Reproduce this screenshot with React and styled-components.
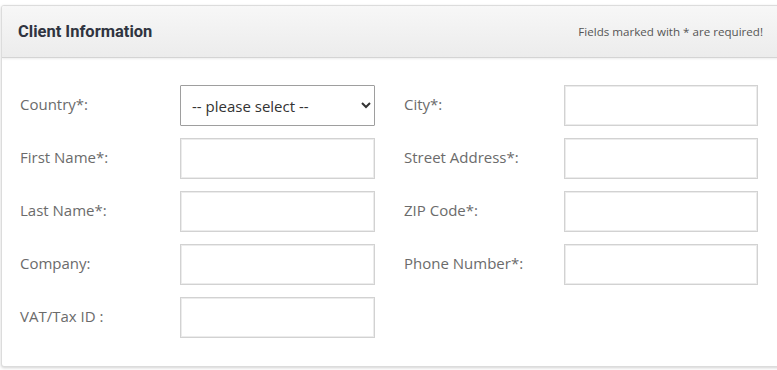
import React from "react";
import styled, { createGlobalStyle } from "styled-components";

const GlobalStyle = createGlobalStyle`
  html, body {
    margin: 0;
    padding: 0;
    background: #fff;
    overflow: hidden;
  }
  body {
    font-family: "Open Sans", "Liberation Sans", sans-serif;
  }
`;

const Page = styled.div`
  padding: 5px 0 0 1px;
  width: 777px;
  height: 370px;
  box-sizing: border-box;
`;

const Panel = styled.div`
  width: 800px;
  height: 362px;
  box-sizing: border-box;
  border: 1px solid #dcdcdc;
  border-radius: 3px;
  box-shadow: 0 1px 3px rgba(0, 0, 0, 0.18);
  background: #fff;
  overflow: hidden;
`;

const Header = styled.div`
  display: flex;
  align-items: center;
  justify-content: space-between;
  height: 52px;
  box-sizing: border-box;
  padding: 0 37px 0 16px;
  background: linear-gradient(to bottom, #f7f7f7, #ececec);
  border-bottom: 1px solid #d4d4d4;
  box-shadow: 0 1px 2px rgba(0, 0, 0, 0.08);
`;

const Title = styled.h3`
  margin: 0;
  font-family: Roboto, "Liberation Sans", sans-serif;
  font-weight: 700;
  font-size: 16.5px;
  color: #2f3440;
`;

const Note = styled.span`
  font-size: 11.6px;
  color: #555;
`;

const Body = styled.div`
  display: grid;
  grid-template-columns: 355px 354px;
  column-gap: 29px;
  padding: 27px 0 0 18px;
`;

const Column = styled.div`
  display: flex;
  flex-direction: column;
  gap: 12px;
`;

const Row = styled.div`
  display: flex;
  align-items: center;
  height: 41px;
`;

const Label = styled.label`
  width: 160px;
  flex-shrink: 0;
  padding-bottom: 3px;
  font-size: 15px;
  color: #6b6b6b;
`;

const TextInput = styled.input`
  width: ${(p) => p.$w || 195}px;
  height: 41px;
  box-sizing: border-box;
  border: 1px solid #d2d2d2;
  box-shadow: inset 0 0 0 1px #ececec;
  background: #fff;
  outline: none;
`;

const Select = styled.select`
  width: 195px;
  height: 41px;
  box-sizing: border-box;
  border: 1px solid #9e9e9e;
  border-radius: 1px;
  background: #fff;
  padding: 0 8px 0 7px;
  font-family: "Open Sans", "Liberation Sans", sans-serif;
  font-size: 15px;
  color: #333;
  outline: none;
`;

const leftFields = [
  { label: "Country*:", select: true },
  { label: "First Name*:" },
  { label: "Last Name*:" },
  { label: "Company:" },
  { label: "VAT/Tax ID :" },
];

const rightFields = ["City*:", "Street Address*:", "ZIP Code*:", "Phone Number*:"];

export default function App() {
  return (
    <Page>
      <GlobalStyle />
      <Panel>
        <Header>
          <Title>Client Information</Title>
          <Note>Fields marked with * are required!</Note>
        </Header>
        <Body>
          <Column>
            {leftFields.map((f) => (
              <Row key={f.label}>
                <Label>{f.label}</Label>
                {f.select ? (
                  <Select defaultValue="">
                    <option value="">-- please select --</option>
                  </Select>
                ) : (
                  <TextInput type="text" />
                )}
              </Row>
            ))}
          </Column>
          <Column>
            {rightFields.map((l) => (
              <Row key={l}>
                <Label>{l}</Label>
                <TextInput type="text" $w={194} />
              </Row>
            ))}
          </Column>
        </Body>
      </Panel>
    </Page>
  );
}
